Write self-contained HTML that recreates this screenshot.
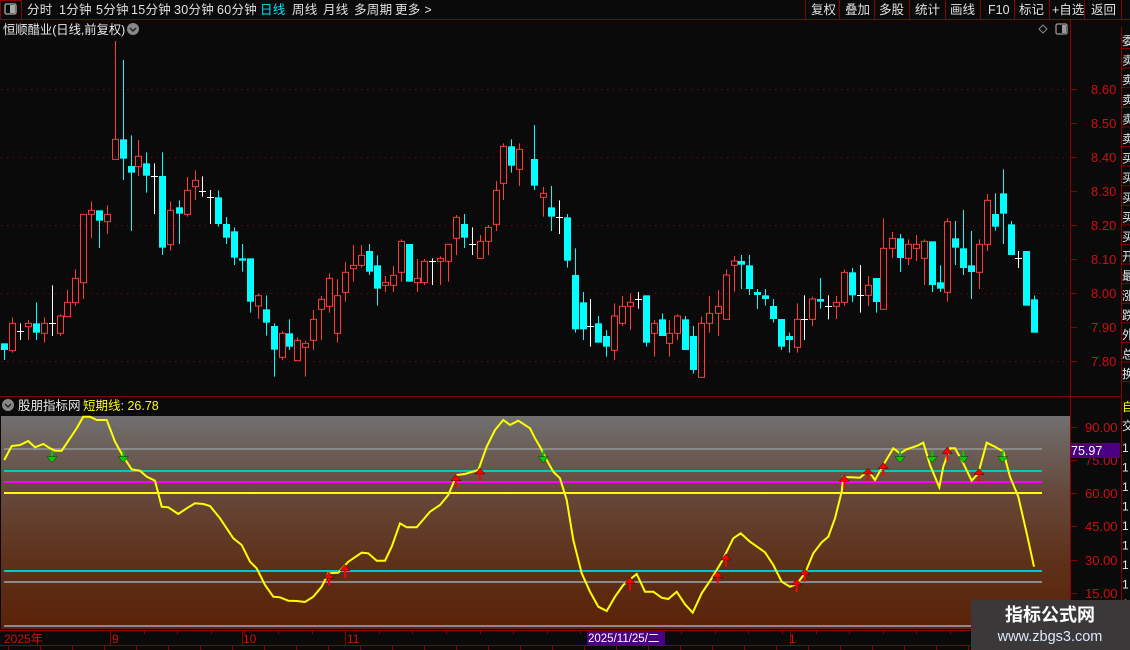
<!DOCTYPE html>
<html><head><meta charset="utf-8"><style>
html,body{margin:0;padding:0;background:#0a0a0a;width:1130px;height:650px;overflow:hidden}
svg{display:block}
text{font-family:"Liberation Sans","Noto Sans CJK SC",sans-serif}
</style></head><body>
<svg id="s" width="1130" height="650" xmlns="http://www.w3.org/2000/svg">
<defs><linearGradient id="g" x1="0" y1="0" x2="0" y2="1">
<stop offset="0" stop-color="#707070"/><stop offset="0.35" stop-color="#66493c"/><stop offset="0.7" stop-color="#5e3018"/><stop offset="1" stop-color="#5a2208"/></linearGradient></defs>
<rect width="1130" height="650" fill="#0a0a0a"/>
<rect x="0" y="0" width="1130" height="19" fill="#0a0a0a"/>
<line x1="0" y1="19.5" x2="1130" y2="19.5" stroke="#8b0000"/>
<rect x="0.5" y="0.5" width="21" height="19" fill="none" stroke="#8b0000"/>
<rect x="5" y="4" width="11" height="10" rx="1.5" fill="none" stroke="#aaa" stroke-width="1.3"/><rect x="10" y="5" width="5" height="8" fill="#aaa"/>
<g font-size="12.5" fill="#e0e0e0" letter-spacing="0.3">
<text x="27" y="14">分时</text><text x="59" y="14">1分钟</text><text x="96" y="14">5分钟</text><text x="131" y="14">15分钟</text><text x="174" y="14">30分钟</text><text x="217" y="14">60分钟</text>
<text x="260" y="14" fill="#00e5ff">日线</text><text x="292" y="14">周线</text><text x="323" y="14">月线</text><text x="354" y="14">多周期</text><text x="395" y="14">更多 &gt;</text>
</g>
<g stroke="#8b0000"><line x1="805.5" y1="0" x2="805.5" y2="19"/><line x1="839.5" y1="0" x2="839.5" y2="19"/><line x1="874.5" y1="0" x2="874.5" y2="19"/><line x1="909.5" y1="0" x2="909.5" y2="19"/><line x1="945.5" y1="0" x2="945.5" y2="19"/><line x1="980.5" y1="0" x2="980.5" y2="19"/><line x1="1014.5" y1="0" x2="1014.5" y2="19"/><line x1="1049.5" y1="0" x2="1049.5" y2="19"/><line x1="1084.5" y1="0" x2="1084.5" y2="19"/><line x1="1121.5" y1="0" x2="1121.5" y2="19"/></g>
<g font-size="12.5" fill="#e0e0e0">
<text x="811" y="14">复权</text><text x="845" y="14">叠加</text><text x="879" y="14">多股</text><text x="915" y="14">统计</text><text x="950" y="14">画线</text><text x="988" y="14">F10</text><text x="1019" y="14">标记</text><text x="1052" y="14">+自选</text><text x="1091" y="14">返回</text>
</g>
<text x="3" y="34" font-size="12.3" fill="#e8e8e8">恒顺醋业(日线,前复权)</text>
<circle cx="133" cy="29" r="6" fill="#888"/><path d="M130 28l3 3 3-3" stroke="#222" stroke-width="1.5" fill="none"/>
<path d="M1043 25l4 4-4 4-4-4z" fill="none" stroke="#888"/>
<rect x="1056" y="24" width="11" height="10" rx="1.5" fill="none" stroke="#999" stroke-width="1.3"/><rect x="1062" y="25" width="4" height="8" fill="#999"/>
<line x1="1070.5" y1="20" x2="1070.5" y2="646" stroke="#8b0000"/>
<line x1="1121.5" y1="27" x2="1121.5" y2="650" stroke="#8b0000"/>
<line x1="0" y1="396.5" x2="1121" y2="396.5" stroke="#8b0000"/>
<g id="grid" stroke="#8b0000" stroke-dasharray="1,5"></g>
<g id="pax" font-size="13" fill="#cc1010"></g>
<g id="cand"></g>
<circle cx="8" cy="405" r="6" fill="#888"/><path d="M5 404l3 3 3-3" stroke="#222" stroke-width="1.5" fill="none"/>
<text x="18" y="410" font-size="12.5" fill="#e8e8e8">股朋指标网</text>
<text x="83" y="410" font-size="12.5" fill="#ffff00">短期线: 26.78</text>
<rect x="1" y="416" width="1069" height="213" fill="url(#g)"/>
<g stroke-width="2">
<line x1="4" y1="449" x2="1042" y2="449" stroke="#8a8a8a"/>
<line x1="4" y1="471" x2="1042" y2="471" stroke="#00c8c8"/>
<line x1="4" y1="482" x2="1042" y2="482" stroke="#ff00ff"/>
<line x1="4" y1="493" x2="1042" y2="493" stroke="#ffff00"/>
<line x1="4" y1="571" x2="1042" y2="571" stroke="#00c8c8"/>
<line x1="4" y1="582" x2="1042" y2="582" stroke="#8a8a8a"/>
<line x1="4" y1="626" x2="1070" y2="626" stroke="#8a8a8a"/>
</g>
<polyline id="ind" fill="none" stroke="#ffff00" stroke-width="2"/>
<g id="arr"></g>
<g id="iax" font-size="13" fill="#cc1010"></g>
<rect x="1071" y="443" width="49" height="15" fill="#4b0082"/>
<text x="1071" y="455" font-size="12.5" fill="#ffffff">75.97</text>
<g id="rs" font-size="12" fill="#e8e8e8"></g>
<line x1="0" y1="630.5" x2="1121" y2="630.5" stroke="#8b0000"/>
<line x1="0" y1="645.5" x2="1130" y2="645.5" stroke="#8b0000"/>
<g id="xt" stroke="#8b0000"></g>
<g font-size="12" fill="#cc1010"><text x="4" y="643">2025年</text><text x="112" y="643">9</text><text x="243" y="643">10</text><text x="347" y="643">11</text><text x="789" y="643">1</text></g>
<rect x="587" y="631" width="78" height="14" fill="#4b0082"/>
<text x="588" y="642" font-size="11.5" fill="#ffffff">2025/11/25/二</text>
<rect x="971" y="600" width="159" height="50" fill="#3a3838"/>
<text x="1050" y="621" font-size="18" font-weight="bold" fill="#ffffff" text-anchor="middle">指标公式网</text>
<text x="1050" y="641" font-size="14.5" fill="#dde8ff" text-anchor="middle">www.zbgs3.com</text>
</svg>
<script>
var NS="http://www.w3.org/2000/svg";
function el(p,t,a,txt){var e=document.createElementNS(NS,t);for(var k in a)e.setAttribute(k,a[k]);if(txt)e.textContent=txt;document.getElementById(p).appendChild(e);return e;}
[8.6,8.4,8.2,8.0,7.8].forEach(function(p){var y=Math.round(89+(8.6-p)*340)+.5;el("grid","line",{x1:1,y1:y,x2:1068,y2:y});});
for(var i=0;i<9;i++){var p=8.6-i*0.1,y=89+i*34;el("pax","text",{x:1091,y:y+5},p.toFixed(2));el("pax","line",{x1:1070,y1:y+.5,x2:1077,y2:y+.5,stroke:"#8b0000"});}
[[90,427],[75,460],[60,493],[45,526],[30,560],[15,593]].forEach(function(a){el("iax","text",{x:1085,y:a[1]+5},a[0].toFixed(2));el("iax","line",{x1:1070,y1:a[1]+.5,x2:1077,y2:a[1]+.5,stroke:"#8b0000"});});
var A=[[13,910,960,910,930,'c'],[37,832,938,850,932,'r'],[60,850,900,872,872,'w'],[84,840,900,850,860,'r'],[108,787,900,850,878,'c'],[131,832,908,850,880,'r'],[155,736,888,850,850,'w'],[179,823,888,828,880,'r'],[202,750,830,787,830,'r'],[226,688,798,715,788,'r'],[250,523,777,523,728,'r'],[273,484,594,511,523,'r'],[297,511,624,511,542,'c'],[321,496,582,523,545,'r'],[344,3,358,298,358,'r'],[368,60,420,298,356,'c'],[392,286,573,378,398,'c'],[415,300,408,349,380,'r'],[439,337,458,370,407,'c'],[463,370,522,409,409,'w'],[486,337,645,408,623,'c'],[510,484,632,511,614,'r'],[537,481,612,502,521,'c'],[560,411,530,451,523,'r'],[584,391,480,421,440,'r'],[607,409,470,452,452,'w'],[631,450,552,472,472,'w'],[655,451,560,472,552,'c'],[678,531,612,552,593,'c'],[702,562,675,574,653,'c'],[726,612,695,655,662,'c'],[749,655,818,655,785,'c'],[773,760,837,767,798,'r'],[797,766,887,808,848,'c'],[821,850,1010,858,929,'c'],[845,873,960,880,952,'r'],[868,838,930,880,920,'c'],[892,892,962,901,962,'r'],[915,903,1010,910,922,'r'],[939,810,930,838,901,'r'],[963,768,900,778,808,'r'],[987,700,818,715,799,'r'],[1010,718,908,767,880,'r'],[1034,666,785,697,757,'r'],[1058,615,725,676,686,'r'],[1083,615,683,646,676,'r'],[1108,612,705,633,695,'c'],[1131,646,797,676,746,'c'],[1155,708,756,727,736,'r'],[1179,678,756,706,736,'r'],[1202,598,725,604,697,'r'],[1226,612,725,612,725,'c'],[1250,657,756,715,728,'r'],[1273,657,735,664,728,'r'],[1297,655,735,663,663,'w'],[1321,649,735,655,664,'r'],[1345,613,725,613,664,'r'],[1368,525,645,532,595,'r'],[1392,522,624,552,593,'c'],[1415,562,645,612,612,'w'],[1439,585,655,604,655,'r'],[1463,555,645,562,604,'r'],[1487,423,573,451,553,'r'],[1510,310,480,319,430,'r'],[1534,298,398,319,377,'c'],[1557,310,438,328,388,'r']];
var B=[[13,255,450,357,437,'c'],[40,441,530,460,472,'r'],[63,438,573,502,530,'c'],[87,481,582,532,532,'w'],[111,522,683,532,662,'c'],[134,625,878,705,868,'c'],[158,756,900,787,868,'c'],[181,777,920,858,858,'w'],[205,828,908,850,908,'c'],[229,870,950,888,920,'c'],[253,790,960,828,931,'r'],[276,768,857,799,850,'r'],[300,760,870,787,799,'r'],[323,756,806,777,777,'w'],[347,766,920,766,908,'c'],[371,840,950,850,880,'r'],[395,820,888,838,888,'c'],[418,840,950,880,910,'r'],[442,823,900,828,880,'r'],[466,828,930,838,930,'c'],[490,858,1000,888,990,'c'],[513,830,1012,850,1012,'r'],[537,768,878,820,850,'r'],[563,750,888,799,820,'r'],[587,688,838,705,838,'r'],[611,648,755,663,676,'r'],[634,645,747,663,674,'c'],[658,645,765,676,747,'c'],[681,747,807,756,765,'c'],[705,747,797,766,777,'c'],[729,777,848,798,837,'c'],[753,837,930,837,920,'c'],[776,878,938,888,900,'c'],[800,790,938,838,922,'r'],[823,766,900,838,838,'w'],[847,770,858,777,838,'r'],[871,714,806,777,785,'c'],[894,766,838,799,799,'w'],[918,768,837,787,799,'r'],[942,688,798,697,787,'r'],[966,684,786,697,766,'c'],[989,675,818,766,766,'w'],[1013,708,798,736,766,'r'],[1037,714,818,714,786,'c'],[1060,535,808,625,808,'r'],[1087,576,654,595,625,'r'],[1110,582,696,595,654,'c'],[1134,598,675,613,655,'r'],[1158,585,663,613,625,'r'],[1182,598,735,604,655,'r'],[1205,604,756,604,735,'c'],[1229,676,756,727,746,'c'],[1252,535,785,545,757,'r'],[1276,543,675,595,623,'c'],[1300,510,705,625,684,'c'],[1323,573,777,676,696,'c'],[1347,598,747,613,697,'r'],[1371,462,633,481,613,'r'],[1395,460,572,522,560,'c'],[1418,388,612,460,521,'c'],[1442,543,645,553,645,'c'],[1465,633,684,655,655,'w'],[1489,633,797,633,797,'c'],[1513,766,878,778,878,'c']];
function draw(arr,off){arr.forEach(function(c){var x=Math.round(c[0]/3+off),wt=40+c[1]/3,wb=40+c[2]/3,bt=40+c[3]/3,bb=40+c[4]/3;
var col=c[5]=='c'?'#00ffff':(c[5]=='r'?'#ff3a3a':'#ffffff');
if(c[5]=='w'){el("cand","line",{x1:x+.5,y1:wt,x2:x+.5,y2:wb,stroke:col});el("cand","line",{x1:x-3,y1:Math.round(bt)+.5,x2:x+4,y2:Math.round(bt)+.5,stroke:col});return;}
if(c[5]=='c'){el("cand","line",{x1:x+.5,y1:wt,x2:x+.5,y2:wb,stroke:col});el("cand","rect",{x:x-3,y:bt,width:7,height:Math.max(1.5,bb-bt),fill:col});}
else{el("cand","line",{x1:x+.5,y1:wt,x2:x+.5,y2:bt,stroke:col});el("cand","line",{x1:x+.5,y1:bb,x2:x+.5,y2:wb,stroke:col});el("cand","rect",{x:x-2.5,y:bt,width:6,height:Math.max(1.5,bb-bt),fill:"none",stroke:col});}
});}
draw(A,0);draw(B,530);
var L=[[13,150],[35,108],[60,105],[85,93],[105,112],[130,102],[150,115],[165,122],[185,122],[210,85],[230,55],[250,20],[270,20],[290,30],[320,30],[345,95],[370,140],[395,178],[420,182],[440,200],[465,212],[485,290],[505,292],[535,312],[560,295],[585,280],[610,282],[630,288],[660,325],[700,385],[725,405],[750,455],[770,475],[795,525],[820,560],[840,562],[865,572],[890,573],[915,576],[940,560],[965,530],[985,490],[1015,488],[1045,455],[1085,428],[1105,430],[1130,452],[1155,452],[1175,410],[1200,340],[1220,352],[1250,352],[1290,305],[1320,285],[1345,255],[1370,195],[1395,192],[1435,180],[1460,110],[1485,60],[1510,30],[1530,45],[1555,32]];
var R=[[0,55],[15,85],[30,110],[50,150],[70,185],[90,205],[110,270],[130,390],[155,490],[180,545],[205,590],[230,603],[255,560],[280,525],[320,492],[345,545],[370,545],[395,563],[415,567],[440,545],[465,583],[488,608],[515,550],[545,505],[575,455],[610,385],[632,370],[660,395],[705,427],[730,465],[755,515],[780,530],[800,522],[825,490],[850,430],[875,397],[895,380],[915,325],[935,245],[940,202],[965,202],[990,203],[1015,182],[1035,210],[1060,165],[1090,115],[1110,130],[1130,118],[1160,108],[1180,98],[1200,165],[1228,232],[1240,170],[1260,115],[1275,115],[1300,160],[1325,212],[1345,190],[1370,98],[1395,110],[1420,125],[1440,200],[1465,260],[1490,370],[1512,470]];
var pts=L.map(function(p){return (p[0]/3).toFixed(1)+","+(410+p[1]/3).toFixed(1)}).concat(R.map(function(p){return (530+p[0]/3).toFixed(1)+","+(410+p[1]/3).toFixed(1)}));
document.getElementById("ind").setAttribute("points",pts.join(" "));
function dn(x,y){el("arr","rect",{x:x-1,y:y-6,width:2,height:6,fill:"#00cc00"});el("arr","path",{d:"M"+(x-5)+" "+y+"h10l-5 6z",fill:"#00cc00",stroke:"#103010","stroke-width":"0.5"});}
function up(x,y){el("arr","path",{d:"M"+(x-5)+" "+y+"h10l-5 -6z",fill:"#ff0000",stroke:"#300","stroke-width":"0.5"});el("arr","rect",{x:x-1,y:y,width:2,height:7,fill:"#ff0000"});}
[[156,140],[370,140]].forEach(function(p){dn(p[0]/3,410+p[1]/3);});
[[40,140],[1110,140],[1207,140],[1300,140],[1418,140]].forEach(function(p){dn(530+p[0]/3,410+p[1]/3);});
[[987,505],[1035,482],[1368,212],[1440,192]].forEach(function(p){up(p[0]/3,410+p[1]/3);});
[[300,520],[563,502],[588,450],[800,525],[824,494],[943,214],[1014,192],[1060,176],[1252,130],[1347,194]].forEach(function(p){up(530+p[0]/3,410+p[1]/3);});
var chs="委卖卖卖卖卖买买买买买开最涨跌外总换";for(var i=0;i<18;i++){el("rs","text",{x:1122,y:45+i*19.6},chs[i]);el("rs","line",{x1:1122,y1:48+i*19.6+.5,x2:1130,y2:48+i*19.6+.5,stroke:"#8b0000"});}
el("rs","text",{x:1122,y:411,fill:"#ffff00"},"自");el("rs","text",{x:1122,y:430},"交");
for(var i=0;i<9;i++)el("rs","text",{x:1122,y:452+i*19.5},"1");
for(var x=110;x<1070;x+=33.6){el("xt","line",{x1:Math.round(x)+.5,y1:631,x2:Math.round(x)+.5,y2:634});}
[110,242,345,790].forEach(function(x){el("xt","line",{x1:x+.5,y1:631,x2:x+.5,y2:645});});
for(var x=8;x<1070;x+=32){el("xt","line",{x1:x+.5,y1:646,x2:x+.5,y2:650});}
</script>
</body></html>
